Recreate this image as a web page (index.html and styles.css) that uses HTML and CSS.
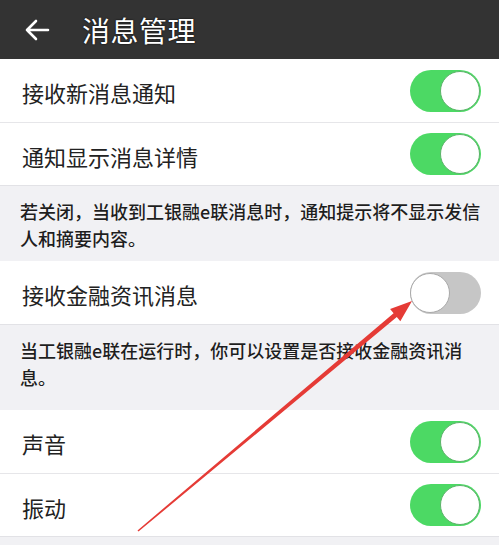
FILE: index.html
```html
<!DOCTYPE html>
<html lang="zh">
<head>
<meta charset="utf-8">
<title>消息管理</title>
<link rel="stylesheet" href="styles.css">
</head>
<body>
<div class="page">
  <header class="bar">
    <svg class="back" width="26" height="22" viewBox="0 0 26 22"><path d="M24 11H3M12 2L3 11L12 20" fill="none" stroke="#fff" stroke-width="2.6" stroke-linecap="round" stroke-linejoin="round"/></svg>
    <h1 class="title">消息管理</h1>
  </header>

  <div class="group">
    <div class="row"><span class="label">接收新消息通知</span><span class="switch on"><span class="knob"></span></span></div>
    <div class="row"><span class="label">通知显示消息详情</span><span class="switch on"><span class="knob"></span></span></div>
  </div>
  <p class="note">若关闭，当收到工银融e联消息时，通知提示将不显示发信<br>人和摘要内容。</p>

  <div class="group">
    <div class="row"><span class="label">接收金融资讯消息</span><span class="switch off"><span class="knob"></span></span></div>
  </div>
  <p class="note note-tall">当工银融e联在运行时，你可以设置是否接收金融资讯消<br>息。</p>

  <div class="group">
    <div class="row"><span class="label">声音</span><span class="switch on"><span class="knob"></span></span></div>
    <div class="row"><span class="label">振动</span><span class="switch on"><span class="knob"></span></span></div>
  </div>

  <svg class="pointer" width="499" height="545" viewBox="0 0 499 545">
    <polygon points="137.5,530.4 393.6,313.2 390.1,309.0 412,301 400.3,321.2 396.8,317.0 138.5,531.6" fill="#e53b36"/>
  </svg>
</div>
</body>
</html>
```

FILE: styles.css
```css
html, body {
  margin: 0;
  padding: 0;
  background: #f1f1f4;
}
body {
  font-family: "Noto Sans CJK SC", "Noto Sans", sans-serif;
  color: #222;
}
.page {
  position: relative;
  width: 499px;
  height: 545px;
  overflow: hidden;
  background: #f1f1f4;
}
.bar {
  height: 59px;
  background: #333333;
  display: flex;
  align-items: center;
  padding-left: 24px;
  box-shadow: 0 1px 2px rgba(0,0,0,0.3);
}
.back {
  display: block;
}
.title {
  margin: 0 0 0 32px;
  font-size: 28px;
  font-weight: 400;
  color: #fff;
  line-height: 1;
  text-shadow: 0 0 2px #000;
  letter-spacing: 0.5px;
}
.group {
  background: #fff;
  border-bottom: 1px solid #e2e2e6;
}
.row {
  height: 63px;
  display: flex;
  align-items: center;
  justify-content: space-between;
  padding: 0 18px 0 22px;
  border-top: 1px solid #e6e6e9;
}
.group .row:first-child {
  border-top: none;
}
.row + .row {
  height: 62px;
}
.label {
  font-size: 22px;
  line-height: 1;
  padding-top: 3px;
}
.switch {
  position: relative;
  width: 71px;
  height: 42px;
  border-radius: 21px;
  box-sizing: border-box;
}
.switch.on {
  background: #4cd964;
}
.switch.off {
  background: #c6c6c6;
}
.knob {
  position: absolute;
  top: 1px;
  width: 40px;
  height: 40px;
  border-radius: 50%;
  background: #fff;
  box-sizing: border-box;
}
.switch.on .knob {
  right: 1px;
  border: 1.5px solid #5cb36a;
}
.switch.off .knob {
  left: 0;
  border: 1.5px solid #a9a9a9;
}
.note {
  margin: 0;
  padding: 12px 10px 9px 20px;
  font-size: 18px;
  line-height: 27px;
  color: #1e1e1e;
  font-weight: 500;
  text-shadow: 0 0 1px #fff;
}
.note-tall {
  padding-bottom: 19px;
}
.pointer {
  position: absolute;
  left: 0;
  top: 0;
  pointer-events: none;
}
```
